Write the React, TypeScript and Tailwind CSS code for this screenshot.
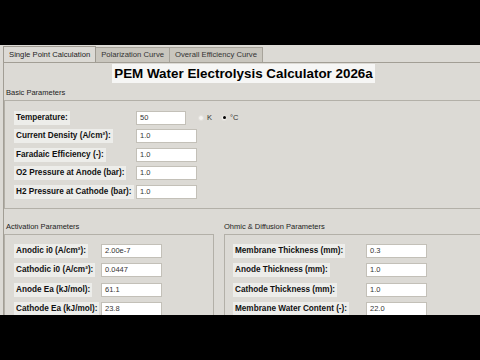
import React from 'react';

const FONT = { fontFamily: '"Liberation Sans", Arial, sans-serif' };

interface FieldProps {
  label: string;
  value: string;
  inputLeft: number;
  inputWidth?: number;
  children?: React.ReactNode;
}

const Field: React.FC<FieldProps> = ({ label, value, inputLeft, inputWidth = 61, children }) => (
  <div className="flex h-[15px] items-center">
    <div className="flex shrink-0 items-center" style={{ width: inputLeft }}>
      <span className="h-[14px] whitespace-nowrap bg-[#ededea] px-[2px] text-[8.2px] font-bold leading-[14px] text-[#111]">
        {label}
      </span>
    </div>
    <div
      className="h-[14px] shrink-0 border border-[#c3c0b8] bg-white pl-[3px] text-[7.5px] leading-[12px] text-[#333]"
      style={{ width: inputWidth }}
    >
      {value}
    </div>
    {children}
  </div>
);

const Radio: React.FC<{ checked?: boolean; label: string }> = ({ checked, label }) => (
  <div className="flex items-center gap-[3px] text-[7.5px] text-[#333]">
    <span className="flex h-[6px] w-[6px] items-center justify-center rounded-full border border-[#e2e0db] bg-[#f4f3f0]">
      {checked && <span className="h-[3px] w-[3px] rounded-full bg-black" />}
    </span>
    <span>{label}</span>
  </div>
);

const Tab: React.FC<{ label: string; active?: boolean }> = ({ label, active }) => (
  <div
    className={
      active
        ? 'h-[16px] border border-b-0 border-[#9e9a91] bg-[#dcdad5] px-[5px] text-[7.7px] leading-[15px] text-[#222]'
        : 'h-[15px] border border-b-0 border-l-0 border-[#a7a39a] bg-[#c9c6be] px-[5px] text-[7.7px] leading-[14px] text-[#333]'
    }
  >
    {label}
  </div>
);

export default function App() {
  return (
    <div className="flex h-[360px] w-[480px] flex-col overflow-hidden bg-black" style={FONT}>
      <div className="h-[45px] shrink-0 bg-black" />
      <div className="h-[270px] shrink-0 overflow-hidden bg-[#dcdad5]">
        {/* tab strip */}
        <div className="flex h-[17px] items-end pl-[3px]">
          <Tab label="Single Point Calculation" active />
          <Tab label="Polarization Curve" />
          <Tab label="Overall Efficiency Curve" />
        </div>

        {/* notebook page */}
        <div className="ml-[3px] w-[540px] border-l border-t border-[#a29e95] pt-[1px]">
          <div className="flex w-[479px] justify-center">
            <span className="h-[19px] bg-[#f6f6f5] px-[2px] text-[13.4px] font-bold leading-[19px] text-black">
              PEM Water Electrolysis Calculator 2026a
            </span>
          </div>

          <div className="mt-[5px] pl-[2px] text-[7.5px] leading-[10px] text-[#222]">Basic Parameters</div>
          <div className="mt-[2px] flex h-[109px] flex-col gap-[3.5px] border border-[#b3b0a8] pl-[9px] pt-[9px]">
            <Field label="Temperature:" value="50" inputLeft={122} inputWidth={50}>
              <div className="ml-[12px] flex items-center gap-[9px]">
                <Radio label="K" />
                <Radio label="°C" checked />
              </div>
            </Field>
            <Field label="Current Density (A/cm²):" value="1.0" inputLeft={122} />
            <Field label="Faradaic Efficiency (-):" value="1.0" inputLeft={122} />
            <Field label="O2 Pressure at Anode (bar):" value="1.0" inputLeft={122} />
            <Field label="H2 Pressure at Cathode (bar):" value="1.0" inputLeft={122} />
          </div>

          <div className="mt-[13px] flex gap-[10px]">
            <div className="w-[210px]">
              <div className="pl-[2px] text-[7.5px] leading-[10px] text-[#222]">Activation Parameters</div>
              <div className="mt-[2px] flex h-[120px] flex-col gap-[4.5px] border border-[#b3b0a8] pl-[9px] pt-[8px]">
                <Field label="Anodic i0 (A/cm²):" value="2.00e-7" inputLeft={87} />
                <Field label="Cathodic i0 (A/cm²):" value="0.0447" inputLeft={87} />
                <Field label="Anode Ea (kJ/mol):" value="61.1" inputLeft={87} />
                <Field label="Cathode Ea (kJ/mol):" value="23.8" inputLeft={87} />
              </div>
            </div>
            <div className="flex-1">
              <div className="text-[7.5px] leading-[10px] text-[#222]">Ohmic &amp; Diffusion Parameters</div>
              <div className="mt-[2px] flex h-[120px] flex-col gap-[4.5px] border border-[#b3b0a8] pl-[8px] pt-[8px]">
                <Field label="Membrane Thickness (mm):" value="0.3" inputLeft={133} />
                <Field label="Anode Thickness (mm):" value="1.0" inputLeft={133} />
                <Field label="Cathode Thickness (mm):" value="1.0" inputLeft={133} />
                <Field label="Membrane Water Content (-):" value="22.0" inputLeft={133} />
              </div>
            </div>
          </div>
        </div>
      </div>
      <div className="h-[45px] shrink-0 bg-black" />
    </div>
  );
}
